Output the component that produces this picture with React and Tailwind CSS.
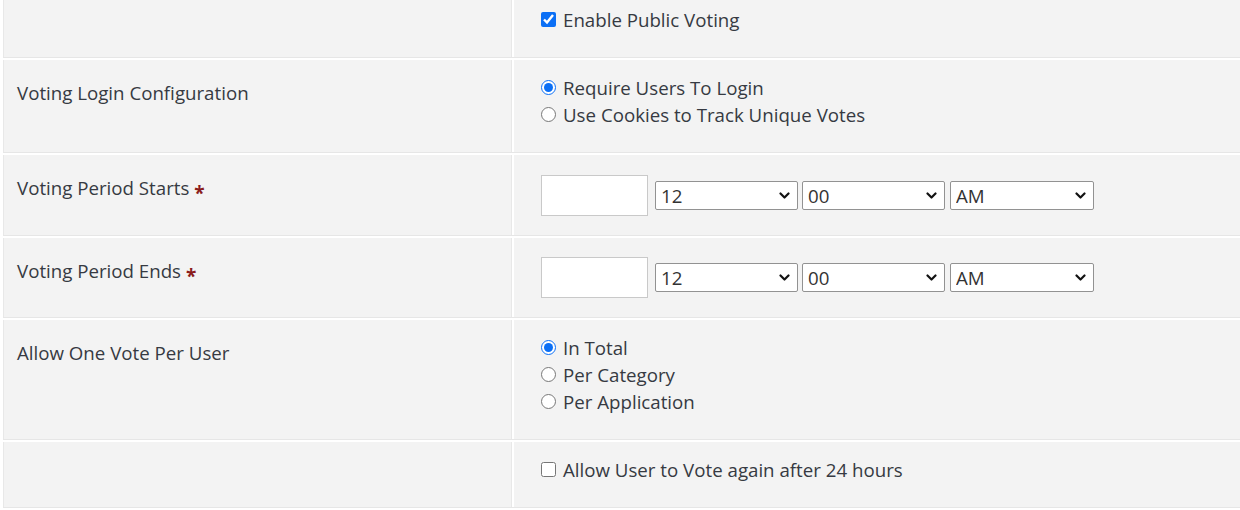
import React from "react";

function Chevron() {
  return (
    <svg className="pointer-events-none absolute right-[8px] top-1/2 -translate-y-1/2" width="11" height="8" viewBox="0 0 11 8">
      <path d="M1.5 1.5 L5.5 5.5 L9.5 1.5" fill="none" stroke="#111" strokeWidth="2.2" strokeLinecap="round" strokeLinejoin="round" />
    </svg>
  );
}

function Select({ value, className }) {
  return (
    <div className={"relative " + className}>
      <select
        defaultValue={value}
        className="appearance-none w-full h-[29px] bg-white border border-[#929292] rounded-[2px] pl-[5px] text-[18.7px] leading-[27px] text-[#333] outline-none"
      >
        <option>{value}</option>
      </select>
      <Chevron />
    </div>
  );
}

function Radio({ checked, label, name }) {
  return (
    <label className="flex items-center h-[27px]">
      <input type="radio" name={name} defaultChecked={checked} className="m-0 w-[15px] h-[15px] accent-[#0b6ff5]" />
      <span className="ml-[7px]">{label}</span>
    </label>
  );
}

function Check({ checked, label }) {
  return (
    <label className="flex items-center h-[27px]">
      <input type="checkbox" defaultChecked={checked} className="m-0 w-[15px] h-[15px] accent-[#0b6ff5]" />
      <span className="ml-[7px]">{label}</span>
    </label>
  );
}

function Req() {
  return <span className="ml-[5px] font-bold text-[#8a1c1c] align-[-5px] text-[19px]">*</span>;
}

function Row({ label, children, rightPad = "pt-[14px] pb-[24px]", leftPad = "pt-[19px]" }) {
  return (
    <div className="flex border-b border-[#e6e6e6] mb-[2px]">
      <div className={"w-[509px] shrink-0 pl-[13px] border-l border-r border-[#e8e8e8] bg-[#f3f3f3] " + leftPad}>
        {label}
      </div>
      <div className={"flex-1 ml-[2px] pl-[27px] bg-[#f3f3f3] " + rightPad}>{children}</div>
    </div>
  );
}

function TimeRow() {
  return (
    <div className="flex items-center">
      <input type="text" className="w-[107px] h-[41px] bg-white border border-[#c9c9c9]" />
      <Select value="12" className="ml-[7px] w-[143px]" />
      <Select value="00" className="ml-[4px] w-[143px]" />
      <Select value="AM" className="ml-[5px] w-[144px]" />
    </div>
  );
}

export default function App() {
  return (
    <div
      className="w-[1240px] h-[510px] overflow-hidden bg-white pl-[3px] text-[18.7px] leading-[27px] text-[#363a42]"
      style={{ fontFamily: '"Open Sans", "Noto Sans", sans-serif' }}
    >
      <div className="-mt-[8px]">
        <Row label="">
          <Check checked label="Enable Public Voting" />
        </Row>
        <Row label="Voting Login Configuration">
          <Radio name="login" checked label="Require Users To Login" />
          <Radio name="login" label="Use Cookies to Track Unique Votes" />
        </Row>
        <Row
          label={
            <span>
              Voting Period Starts
              <Req />
            </span>
          }
          rightPad="pt-[20px] pb-[19px]"
        >
          <TimeRow />
        </Row>
        <Row
          label={
            <span>
              Voting Period Ends
              <Req />
            </span>
          }
          rightPad="pt-[19px] pb-[19px]"
        >
          <TimeRow />
        </Row>
        <Row label="Allow One Vote Per User">
          <Radio name="per" checked label="In Total" />
          <Radio name="per" label="Per Category" />
          <Radio name="per" label="Per Application" />
        </Row>
        <Row label="">
          <Check label="Allow User to Vote again after 24 hours" />
        </Row>
      </div>
    </div>
  );
}
